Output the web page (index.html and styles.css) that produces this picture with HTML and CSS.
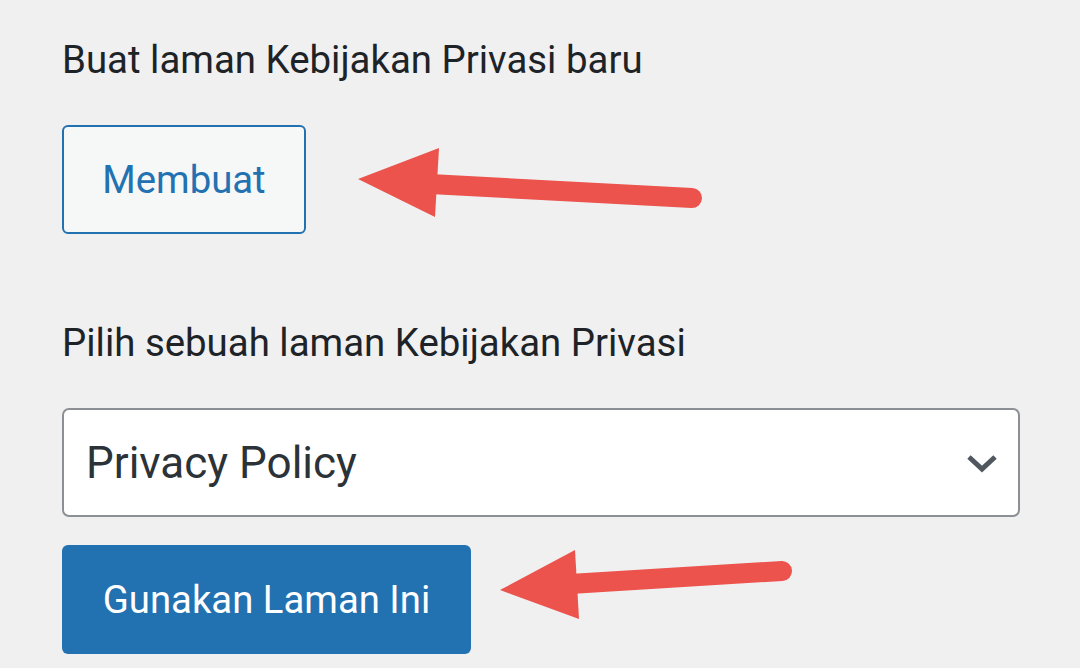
FILE: index.html
```html
<!DOCTYPE html>
<html>
<head>
<meta charset="utf-8">
<link rel="stylesheet" href="styles.css">
</head>
<body>
<div class="page">
  <p class="label first">Buat laman Kebijakan Privasi baru</p>
  <div class="row">
    <button class="btn btn-secondary">Membuat</button>
  </div>
  <p class="label second">Pilih sebuah laman Kebijakan Privasi</p>
  <div class="select">
    <span class="select-text">Privacy Policy</span>
    <svg class="chevron" width="32" height="20" viewBox="0 0 32 20"><path d="M3 4 L16 16 L29 4" fill="none" stroke="#50575e" stroke-width="5"/></svg>
  </div>
  <button class="btn btn-primary">Gunakan Laman Ini</button>
</div>
<svg class="arrow arrow-1" width="1080" height="668" viewBox="0 0 1080 668">
  <line x1="430" y1="184" x2="692" y2="198" stroke="#eb534c" stroke-width="20" stroke-linecap="round"/>
  <polygon points="358,179 439,148 435,217" fill="#eb534c"/>
  <line x1="570" y1="584" x2="782" y2="571" stroke="#eb534c" stroke-width="20" stroke-linecap="round"/>
  <polygon points="500,590 575,550 579,619" fill="#eb534c"/>
</svg>
</body>
</html>
```
FILE: styles.css
```css
html, body {
  margin: 0;
  padding: 0;
}
body {
  background: #f0f0f1;
  width: 1080px;
  height: 668px;
  overflow: hidden;
  font-family: Roboto, "Liberation Sans", sans-serif;
  position: relative;
}
.page {
  padding: 0 0 0 62px;
  display: flex;
  flex-direction: column;
  align-items: flex-start;
}
.label {
  margin: 0;
  font-size: 38.4px;
  line-height: 44px;
  color: #1d2327;
}
.first {
  margin-top: 38px;
}
.row {
  margin-top: 43px;
}
.btn {
  font-family: Roboto, "Liberation Sans", sans-serif;
  font-size: 38.3px;
  border-radius: 6px;
  box-sizing: border-box;
  height: 109px;
  padding: 0 30px;
  cursor: pointer;
}
.btn-secondary {
  width: 244px;
  background: #f6f7f7;
  border: 2px solid #2271b1;
  color: #2271b1;
}
.second {
  margin-top: 87px;
}
.select {
  margin-top: 43px;
  width: 958px;
  height: 109px;
  box-sizing: border-box;
  background: #fff;
  border: 2px solid #8c8f94;
  border-radius: 7px;
  display: flex;
  align-items: center;
  justify-content: space-between;
  padding: 0 20px 0 22px;
}
.select-text {
  font-size: 44px;
  color: #2c3338;
}
.btn-primary {
  margin-top: 28px;
  width: 409px;
  background: #2271b1;
  border: none;
  color: #fff;
}
.arrow {
  position: absolute;
  left: 0;
  top: 0;
  pointer-events: none;
}
```
